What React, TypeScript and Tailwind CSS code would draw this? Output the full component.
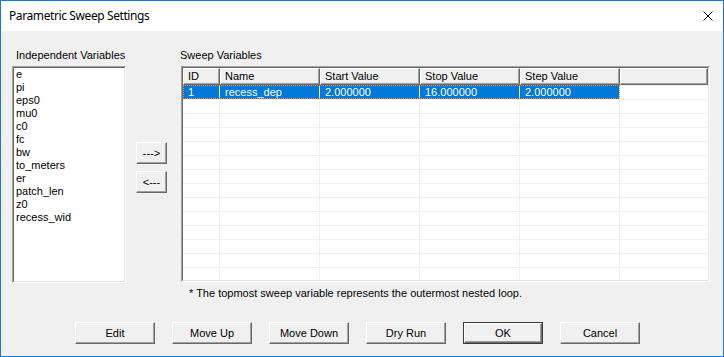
import React from "react";

const items = ["e", "pi", "eps0", "mu0", "c0", "fc", "bw", "to_meters", "er", "patch_len", "z0", "recess_wid"];
const cols = [
  { label: "ID", w: "w-[37px]" },
  { label: "Name", w: "w-[100px]" },
  { label: "Start Value", w: "w-[100px]" },
  { label: "Stop Value", w: "w-[100px]" },
  { label: "Step Value", w: "w-[100px]" },
];
const sel = ["1", "recess_dep", "2.000000", "16.000000", "2.000000"];

function Btn({ children, w, def }: { children: React.ReactNode; w: string; def?: boolean }) {
  return (
    <div className={`${w} h-[22px] ${def ? "border border-[#3c3c3c]" : ""} box-border`}>
      <div className="w-full h-full box-border border border-t-white border-l-white border-r-[#696969] border-b-[#696969] bg-[#f0f0f0] shadow-[inset_-1px_-1px_0_#a0a0a0] flex items-center justify-center text-black">
        {children}
      </div>
    </div>
  );
}

function Sunken({ className, children }: { className: string; children?: React.ReactNode }) {
  return (
    <div className={`${className} box-border border border-t-[#a0a0a0] border-l-[#a0a0a0] border-r-white border-b-white`}>
      <div className="w-full h-full box-border border border-t-[#696969] border-l-[#696969] border-r-[#e3e3e3] border-b-[#e3e3e3] bg-white overflow-hidden">
        {children}
      </div>
    </div>
  );
}

export default function App() {
  const rows = Array.from({ length: 14 }, (_, i) => i);
  return (
    <div className="w-[724px] h-[357px] box-border border border-[#1979d2] bg-[#f0f0f0] flex flex-col overflow-hidden font-['Liberation_Sans',Arial,sans-serif] text-[11px] leading-[13px] text-black">
      <div className="h-[30px] shrink-0 bg-white flex items-center justify-between pl-[8px] pr-[10px]">
        <span className="font-['Noto_Sans',sans-serif] text-[12px] leading-[16px] tracking-[-0.4px] text-black">Parametric Sweep Settings</span>
        <svg width="10" height="10" viewBox="0 0 10 10" className="block">
          <path d="M0.5 0.5 L9.5 9.5 M9.5 0.5 L0.5 9.5" stroke="#000" strokeWidth="1" fill="none" />
        </svg>
      </div>
      <div className="flex-1 flex flex-col pl-[11px] pt-[18px]">
        <div className="flex items-start">
          <div className="flex flex-col w-[114px]">
            <div className="pl-[4px] h-[13px] mb-[4px] whitespace-nowrap">Independent Variables</div>
            <Sunken className="w-[114px] h-[217px]">
              <div className="flex flex-col pl-[2px]">
                {items.map((it) => (
                  <div key={it} className="h-[13px] whitespace-nowrap">{it}</div>
                ))}
              </div>
            </Sunken>
          </div>
          <div className="ml-[10px] mt-[93px] flex flex-col gap-[7px]">
            <Btn w="w-[31px]">---&gt;</Btn>
            <Btn w="w-[31px]">&lt;---</Btn>
          </div>
          <div className="ml-[14px] flex flex-col">
            <div className="h-[13px] mb-[4px] -ml-[1px] whitespace-nowrap">Sweep Variables</div>
            <Sunken className="w-[529px] h-[216px]">
              <div className="flex h-[17px]">
                {cols.map((c) => (
                  <div key={c.label} className={`${c.w} h-[17px] box-border border border-t-white border-l-white border-r-[#696969] border-b-[#696969] shadow-[inset_-1px_-1px_0_#a0a0a0] bg-[#f0f0f0] pl-[4px] flex items-center whitespace-nowrap`}>
                    {c.label}
                  </div>
                ))}
                <div className="flex-1 h-[17px] box-border border border-t-white border-l-white border-r-[#696969] border-b-[#696969] shadow-[inset_-1px_-1px_0_#a0a0a0] bg-[#f0f0f0]" />
              </div>
              {rows.map((r) => (
                <div key={r} className="flex h-[14px]">
                  {r === 0 ? (
                    <div className="relative flex">
                      {cols.map((c, i) => (
                        <div key={c.label} className={`${c.w} h-[14px] box-border border-r border-white bg-[#0078d7] text-white pl-[5px] flex items-center whitespace-nowrap`}>
                          {sel[i]}
                        </div>
                      ))}
                      <div className="absolute inset-0 border border-dotted border-[#ff8728]" />
                    </div>
                  ) : (
                    cols.map((c) => (
                      <div key={c.label} className={`${c.w} h-[14px] box-border border-t border-r border-[#f0f0f0]`} />
                    ))
                  )}
                  <div className="flex-1 h-[14px] box-border border-t border-[#f0f0f0]" />
                </div>
              ))}
            </Sunken>
          </div>
        </div>
        <div className="ml-[177px] mt-[4px] h-[13px] whitespace-nowrap">* The topmost sweep variable represents the outermost nested loop.</div>
        <div className="flex ml-[63px] mt-[22px] gap-[17px]">
          <Btn w="w-[80px]">Edit</Btn>
          <Btn w="w-[80px]">Move Up</Btn>
          <Btn w="w-[80px]">Move Down</Btn>
          <Btn w="w-[80px]">Dry Run</Btn>
          <Btn w="w-[80px]" def>OK</Btn>
          <Btn w="w-[80px]">Cancel</Btn>
        </div>
      </div>
    </div>
  );
}
